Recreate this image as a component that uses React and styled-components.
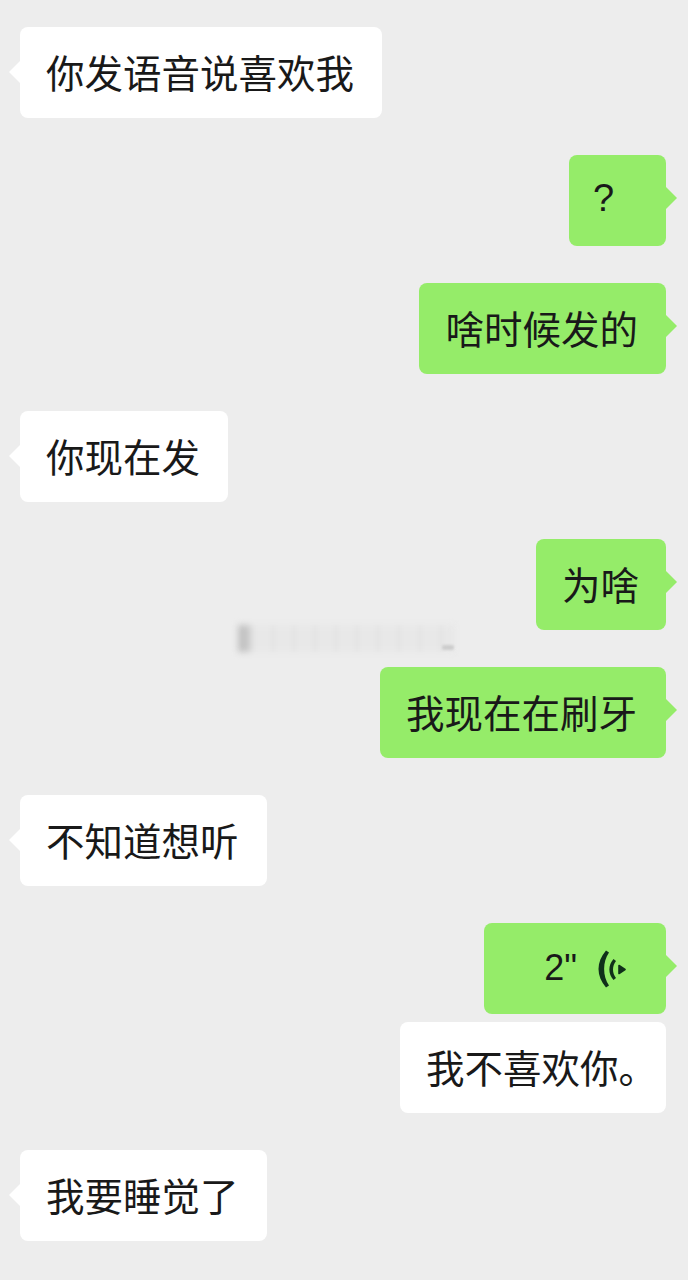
import React from "react";
import styled, { createGlobalStyle } from "styled-components";

const Global = createGlobalStyle`
  html, body { margin: 0; padding: 0; background: #ededed; }
  body { font-family: "Noto Sans CJK SC", "Liberation Sans", sans-serif; }
`;

const Page = styled.main`
  position: relative;
  box-sizing: border-box;
  width: 688px;
  height: 1280px;
  overflow: hidden;
  padding: 27px 22px 0 20px;
  display: flex;
  flex-direction: column;
  background: #ededed;
`;

const Row = styled.div`
  display: flex;
  justify-content: ${(p) => (p.$mine ? "flex-end" : "flex-start")};
  margin-top: ${(p) => (p.$tight ? "8px" : p.$first ? "0" : "37px")};
`;

const Bubble = styled.div`
  position: relative;
  box-sizing: border-box;
  height: 91px;
  width: ${(p) => (p.$width ? `${p.$width}px` : "auto")};
  padding: 0 28px 3px 26px;
  display: flex;
  align-items: center;
  gap: 21px;
  justify-content: ${(p) => (p.$voice ? "flex-end" : "flex-start")};
  border-radius: 8px;
  background: ${(p) => (p.$green ? "#95ec69" : "#ffffff")};
  color: #191919;
  font-size: 38.5px;
  line-height: 1;
  white-space: nowrap;

  &::after {
    content: "";
    display: ${(p) => (p.$noTail ? "none" : "block")};
    position: absolute;
    top: ${(p) => (p.$green ? "32px" : "34px")};
    ${(p) => (p.$green ? "right: -11px;" : "left: -11px;")}
    width: 0;
    height: 0;
    border-top: 11px solid transparent;
    border-bottom: 11px solid transparent;
    ${(p) =>
      p.$green
        ? "border-left: 11px solid #95ec69;"
        : "border-right: 11px solid #ffffff;"}
  }
`;

const Latin = styled.span`
  font-family: "Liberation Sans", sans-serif;
  font-size: 36px;
  margin-top: ${(p) => p.$up || 0}px;
`;

const Question = styled(Latin)`
  font-size: 38px;
  margin-left: -2px;
`;

const Voice = styled.svg`
  width: 28px;
  height: 38px;
  flex: none;
  margin: 3px 12px 0 0;
  color: #10301a;
`;

const Smudge = styled.div`
  position: absolute;
  left: 238px;
  top: 625px;
  width: 216px;
  height: 27px;
  filter: blur(3px);
  background:
    linear-gradient(90deg, #c2c2c2 0, #c2c2c2 9px, transparent 14px),
    repeating-linear-gradient(90deg, #e6e6e6 0 6px, #ececec 6px 10px, #e3e3e3 10px 17px, #ebebeb 17px 21px);
`;

const Dot = styled.div`
  position: absolute;
  left: 442px;
  top: 645px;
  width: 12px;
  height: 5px;
  border-radius: 2px;
  background: #cdcdcd;
  filter: blur(1px);
`;

const VoiceIcon = () => (
  <Voice viewBox="0 0 28 38" fill="currentColor" aria-hidden="true">
    <path d="M8 0.5 L11 2.5 C4.5 12 4.5 26 11 35.5 L8 37.5 C-2 26 -2 12 8 0.5Z" />
    <path d="M15.5 9 L18 11 C14 16 14 23 18 28 L15.5 30 C10 23.5 10 15.5 15.5 9Z" />
    <path d="M21 15.5 L27 19.5 L21 23.5 Z" stroke="currentColor" strokeWidth="1.6" strokeLinejoin="round" />
  </Voice>
);

const messages = [
  { text: "你发语音说喜欢我", first: true },
  { latin: "?", mine: true, width: 97 },
  { text: "啥时候发的", mine: true },
  { text: "你现在发" },
  { text: "为啥", mine: true, width: 130 },
  { text: "我现在在刷牙", mine: true, width: 286 },
  { text: "不知道想听" },
  { voice: '2"', mine: true, width: 182 },
  { text: "我不喜欢你。", mine: true, white: true, tight: true, noTail: true, width: 266 },
  { text: "我要睡觉了" },
];

export default function App() {
  return (
    <Page>
      <Global />
      {messages.map((m, i) => (
        <Row key={i} $mine={m.mine} $first={m.first} $tight={m.tight}>
          <Bubble
            $green={m.mine && !m.white}
            $width={m.width}
            $voice={!!m.voice}
            $noTail={m.noTail}
          >
            {m.text}
            {m.latin && <Question $up={-2}>{m.latin}</Question>}
            {m.voice && (
              <>
                <Latin $up={1}>{m.voice}</Latin>
                <VoiceIcon />
              </>
            )}
          </Bubble>
        </Row>
      ))}
      <Smudge />
      <Dot />
    </Page>
  );
}
